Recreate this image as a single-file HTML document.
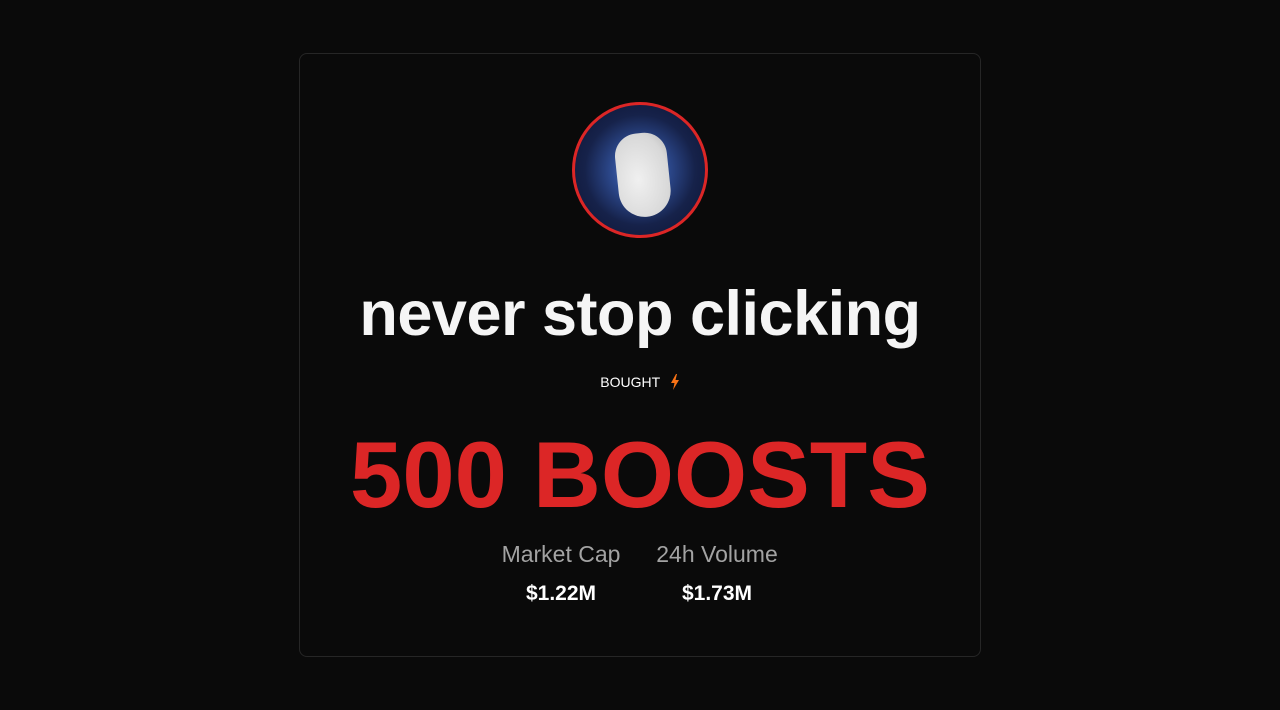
<!DOCTYPE html>
<html><head><meta charset="utf-8"><style>
body{margin:0;background:#0a0a0a;width:1280px;height:710px;overflow:hidden;font-family:"Liberation Sans",sans-serif;}
.card{position:absolute;left:299px;top:53px;width:680px;height:602px;border:1px solid #262626;border-radius:8px;background:#0a0a0a;}
.av{position:absolute;left:572px;top:102px;width:130px;height:130px;border:3px solid #dc2626;border-radius:50%;overflow:hidden;
background:radial-gradient(circle at 50% 50%,#6a85c8 0%,#2d4a8f 30%,#16224a 60%,#0c1230 100%);}
.mouse{position:absolute;left:42px;top:28px;width:52px;height:84px;border-radius:26px 26px 30px 30px;transform:rotate(-6deg);background:radial-gradient(ellipse at 40% 55%,#f0f0f0,#d8d8d8 70%,#b8b8b8);}
.t{position:absolute;left:0;width:1280px;text-align:center;}
</style></head><body>
<div class="card"></div>
<div class="av"><div class="mouse"></div></div>
<div class="t" style="top:278px;font-size:63px;font-weight:bold;color:#f5f5f5;letter-spacing:-0.5px">never stop clicking</div>
<div class="t" style="top:374px;font-size:14px;color:#fff">BOUGHT <svg width="10" height="16" viewBox="0 0 10 16" style="vertical-align:-3px;margin-left:6px"><path d="M6 0L1 9h3.5L3 16l6-10H5.5L7 0z" fill="#f97316"/></svg></div>
<div class="t" style="top:421px;font-size:94px;font-weight:bold;color:#dc2626">500 BOOSTS</div>
<div style="position:absolute;left:491px;top:541px;width:140px;text-align:center;color:#a3a3a3;font-size:23px">Market Cap</div>
<div style="position:absolute;left:647px;top:541px;width:140px;text-align:center;color:#a3a3a3;font-size:23px">24h Volume</div>
<div style="position:absolute;left:491px;top:582px;width:140px;text-align:center;color:#fff;font-size:21px;font-weight:bold">$1.22M</div>
<div style="position:absolute;left:647px;top:582px;width:140px;text-align:center;color:#fff;font-size:21px;font-weight:bold">$1.73M</div>
</body></html>
